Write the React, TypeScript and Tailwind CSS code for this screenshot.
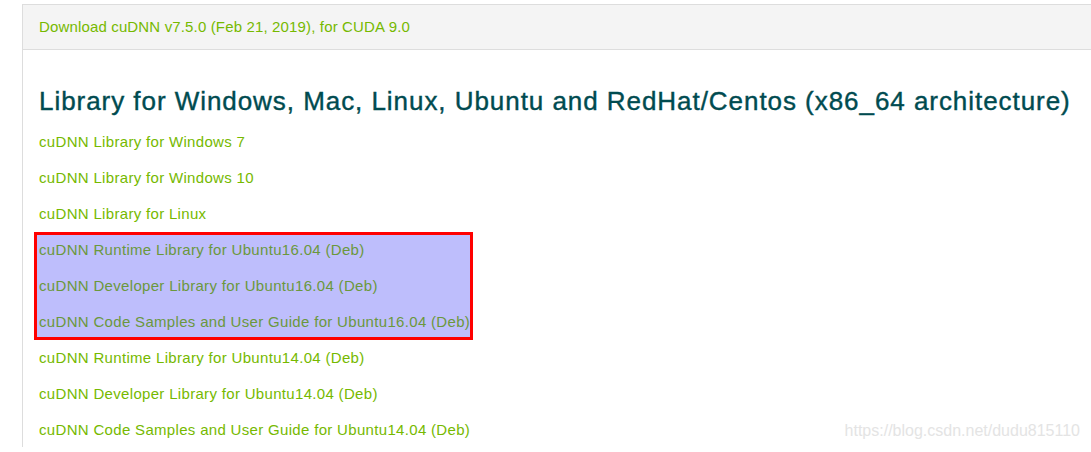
export default function App() {
  const topLinks = [
    'cuDNN Library for Windows 7',
    'cuDNN Library for Windows 10',
    'cuDNN Library for Linux',
  ]

  const marked = [
    'cuDNN Runtime Library for Ubuntu16.04 (Deb)',
    'cuDNN Developer Library for Ubuntu16.04 (Deb)',
    'cuDNN Code Samples and User Guide for Ubuntu16.04 (Deb)',
  ]

  const bottomLinks = [
    'cuDNN Runtime Library for Ubuntu14.04 (Deb)',
    'cuDNN Developer Library for Ubuntu14.04 (Deb)',
    'cuDNN Code Samples and User Guide for Ubuntu14.04 (Deb)',
  ]

  return (
    <div className="relative h-[452px] overflow-hidden bg-white font-['Liberation_Sans',Arial,sans-serif]">
      {/* Download panel */}
      <div className="ml-[22px] mt-[4px] border-l border-t border-[#dddddd]">
        {/* Panel header */}
        <div className="flex h-[45px] items-center border-b border-[#dddddd] bg-[#f4f4f4] pl-[16px]">
          <a className="text-[15px] tracking-[0.15px] text-[#76b900]">
            Download cuDNN v7.5.0 (Feb 21, 2019), for CUDA 9.0
          </a>
        </div>

        {/* Panel body */}
        <div className="pl-[16px] pt-[33px]">
          <h2 className="mb-[4px] h-[36px] whitespace-nowrap text-[26px] leading-[36px] tracking-[0.95px] text-[#004b50] [-webkit-text-stroke:0.4px_#004b50]">
            Library for Windows, Mac, Linux, Ubuntu and RedHat/Centos (x86_64 architecture)
          </h2>

          <div className="tracking-[0.32px]">
            {topLinks.map((link) => (
              <div key={link} className="h-[36px] text-[15px] leading-[37px] text-[#76b900]">
                {link}
              </div>
            ))}

            {/* Highlighted rows */}
            <div className="relative">
              <div className="absolute left-[-5px] top-[1px] h-[108px] w-[439px] border-[3px] border-[#ff0000] bg-[#bebefc]" />
              {marked.map((link) => (
                <div key={link} className="relative h-[36px] text-[15px] leading-[37px] text-[#6b983c]">
                  {link}
                </div>
              ))}
            </div>

            {bottomLinks.map((link) => (
              <div key={link} className="h-[36px] text-[15px] leading-[37px] text-[#76b900]">
                {link}
              </div>
            ))}
          </div>
        </div>
      </div>

      {/* Watermark */}
      <div className="absolute bottom-[9px] right-[11px] text-[16px] text-[#e4e4e4]">
        https://blog.csdn.net/dudu815110
      </div>
    </div>
  )
}
